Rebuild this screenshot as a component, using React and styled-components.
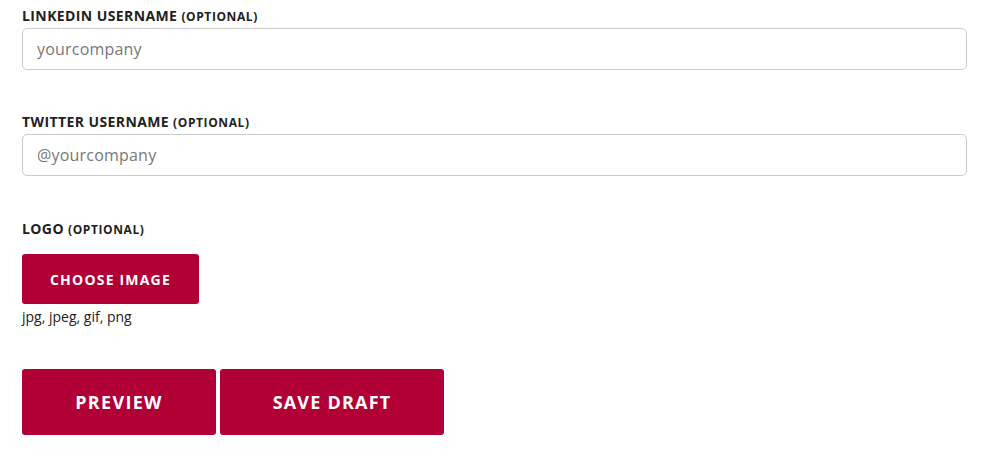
import React from "react";
import styled, { createGlobalStyle } from "styled-components";

const GlobalStyle = createGlobalStyle`
  body {
    margin: 0;
    background: #ffffff;
    font-family: "Open Sans", "Liberation Sans", sans-serif;
    color: #222222;
  }
`;

const Form = styled.form`
  display: flex;
  flex-direction: column;
  padding: 7px 16px 0 22px;
`;

const Field = styled.div`
  display: flex;
  flex-direction: column;
  margin-bottom: ${(p) => p.$gap || "44px"};
`;

const Label = styled.label`
  font-size: 14px;
  font-weight: 700;
  line-height: 17px;
  letter-spacing: 0.4px;
  color: #222222;
  text-transform: uppercase;
  margin-bottom: 3px;
  span {
    font-size: 12px;
    letter-spacing: 0.6px;
  }
`;

const Input = styled.input`
  box-sizing: border-box;
  width: 945px;
  height: 42px;
  border: 1px solid #cccccc;
  border-radius: 5px;
  padding: 0 14px;
  font-family: "Open Sans", "Liberation Sans", sans-serif;
  font-size: 16px;
  letter-spacing: 0.2px;
  color: #222222;
  outline: none;
  &::placeholder {
    color: #777777;
  }
`;

const Button = styled.button`
  box-sizing: border-box;
  border: none;
  border-radius: 3px;
  background: #b10035;
  color: #ffffff;
  font-family: "Open Sans", "Liberation Sans", sans-serif;
  font-weight: 700;
  text-transform: uppercase;
  cursor: pointer;
  padding: 0;
  width: ${(p) => p.$w};
  height: ${(p) => p.$h};
  font-size: ${(p) => p.$fs};
  letter-spacing: ${(p) => p.$ls};
`;

const Upload = styled.div`
  margin-top: 13px;
`;

const Hint = styled.div`
  font-size: 14px;
  color: #222222;
  margin-top: 3px;
`;

const Actions = styled.div`
  display: flex;
  gap: 4px;
`;

export default function App() {
  return (
    <>
      <GlobalStyle />
      <Form onSubmit={(e) => e.preventDefault()}>
        <Field $gap="43px">
          <Label>
            LinkedIn Username <span>(optional)</span>
          </Label>
          <Input placeholder="yourcompany" />
        </Field>
        <Field>
          <Label>
            Twitter Username <span>(optional)</span>
          </Label>
          <Input placeholder="@yourcompany" />
        </Field>
        <Field $gap="43px">
          <Label>
            Logo <span>(optional)</span>
          </Label>
          <Upload>
            <Button type="button" $w="177px" $h="50px" $fs="14px" $ls="1.2px">
              Choose image
            </Button>
          </Upload>
          <Hint>jpg, jpeg, gif, png</Hint>
        </Field>
        <Actions>
          <Button type="button" $w="194px" $h="66px" $fs="18px" $ls="1.3px">
            Preview
          </Button>
          <Button type="button" $w="224px" $h="66px" $fs="18px" $ls="1.2px">
            Save draft
          </Button>
        </Actions>
      </Form>
    </>
  );
}
